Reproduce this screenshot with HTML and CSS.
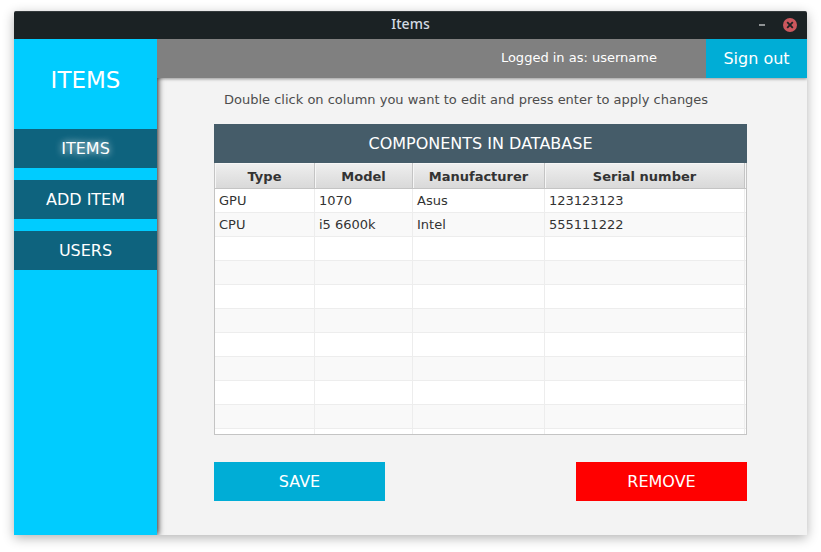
FILE: index.html
```html
<!DOCTYPE html>
<html lang="en">
<head>
<meta charset="utf-8">
<title>Items</title>
<link rel="stylesheet" href="styles.css">
</head>
<body>
<div class="window">
  <header class="titlebar">
    <span class="titlebar-text">Items</span>
    <div class="window-controls">
      <button class="control" type="button" aria-label="Minimize">
        <svg width="14" height="14" viewBox="0 0 14 14"><path d="M4 6h6v2H4z" fill="#8f9394"/></svg>
      </button>
      <button class="control" type="button" aria-label="Close">
        <svg width="14" height="14" viewBox="0 0 14 14"><circle cx="7" cy="7" r="7" fill="#cc575d"/><path d="M4.2 4.2l5.6 5.6M9.8 4.2l-5.6 5.6" stroke="#1b2224" stroke-width="1.8"/></svg>
      </button>
    </div>
  </header>
  <div class="layout">
    <nav class="sidebar">
      <h1 class="sidebar-title">ITEMS</h1>
      <button class="nav-button active" type="button">ITEMS</button>
      <button class="nav-button" type="button">ADD ITEM</button>
      <button class="nav-button" type="button">USERS</button>
    </nav>
    <div class="page">
      <div class="topbar">
        <span class="user">Logged in as: username</span>
        <button class="sign-out" type="button">Sign out</button>
      </div>
      <main class="content">
        <p class="hint">Double click on column you want to edit and press enter to apply changes</p>
        <h2 class="table-title">COMPONENTS IN DATABASE</h2>
        <div class="table-view">
          <table class="items">
            <colgroup><col class="col-type"><col class="col-model"><col class="col-maker"><col><col class="col-rest"></colgroup>
            <thead>
              <tr><th>Type</th><th>Model</th><th>Manufacturer</th><th>Serial number</th><th></th></tr>
            </thead>
            <tbody>
              <tr><td>GPU</td><td>1070</td><td>Asus</td><td>123123123</td><td></td></tr>
              <tr><td>CPU</td><td>i5 6600k</td><td>Intel</td><td>555111222</td><td></td></tr>
              <tr><td></td><td></td><td></td><td></td><td></td></tr>
              <tr><td></td><td></td><td></td><td></td><td></td></tr>
              <tr><td></td><td></td><td></td><td></td><td></td></tr>
              <tr><td></td><td></td><td></td><td></td><td></td></tr>
              <tr><td></td><td></td><td></td><td></td><td></td></tr>
              <tr><td></td><td></td><td></td><td></td><td></td></tr>
              <tr><td></td><td></td><td></td><td></td><td></td></tr>
              <tr><td></td><td></td><td></td><td></td><td></td></tr>
              <tr><td></td><td></td><td></td><td></td><td></td></tr>
            </tbody>
          </table>
        </div>
        <div class="actions">
          <button class="action save" type="button">SAVE</button>
          <button class="action remove" type="button">REMOVE</button>
        </div>
      </main>
    </div>
  </div>
</div>
</body>
</html>
```
FILE: styles.css
```css
* {
  box-sizing: border-box;
}

body {
  margin: 0;
  padding: 11px 14px 17px;
  height: 100vh;
  background: #fff;
  color: #333;
  font: 13px/16px "DejaVu Sans", sans-serif;
}

button {
  border: 0;
  padding: 0;
  color: #fff;
  font: 16px/20px "DejaVu Sans", sans-serif;
}

.window {
  display: flex;
  flex-direction: column;
  height: 100%;
  border-radius: 2px 2px 0 0;
  background: #f3f3f3;
  box-shadow: 0 3px 12px rgba(0, 0, 0, 0.3);
}

.titlebar {
  display: grid;
  grid-template-columns: 1fr auto 1fr;
  align-items: center;
  height: 28px;
  padding: 0 10px 1px;
  border-top: 1px solid #343a3c;
  border-radius: 2px 2px 0 0;
  background: #1b2224;
}

.titlebar-text {
  grid-column: 2;
  padding-bottom: 2px;
  color: #d3dae3;
  font: 500 14px/20px "Noto Sans", sans-serif;
}

.window-controls {
  display: flex;
  justify-content: flex-end;
  gap: 14px;
}

.control {
  display: flex;
  background: none;
}

.layout {
  display: flex;
  flex: 1;
  min-height: 0;
}

.sidebar {
  position: relative;
  z-index: 1;
  display: flex;
  flex-direction: column;
  gap: 12px;
  width: 143px;
  background: #00ccff;
  box-shadow: 1px 0 6px rgba(0, 0, 0, 0.9);
  clip-path: inset(0 -12px 0 0);
}

.sidebar-title {
  margin: 0;
  height: 78px;
  padding-top: 27px;
  color: #fff;
  font-size: 23px;
  font-weight: 400;
  line-height: 28px;
  text-align: center;
}

.nav-button {
  height: 39px;
  background: #0e637e;
}

.active {
  text-shadow: 0 0 7px #fff;
}

.page {
  display: flex;
  flex: 1;
  flex-direction: column;
  min-width: 0;
}

.topbar {
  position: relative;
  z-index: 2;
  display: flex;
  align-items: center;
  justify-content: flex-end;
  gap: 49px;
  background: #808080;
  box-shadow: 0 1px 3px rgba(0, 0, 0, 0.4);
  clip-path: inset(0 0 -6px 0);
}

.user {
  padding-bottom: 2px;
  color: #fff;
}

.sign-out {
  width: 101px;
  height: 39px;
  background: #00add6;
}

.content {
  display: flex;
  flex: 1;
  flex-direction: column;
  min-height: 0;
  padding: 14px 60px 34px 57px;
}

.hint {
  margin: 0 0 16px;
  padding-left: 10px;
  color: #4d4d4d;
}

.table-title {
  margin: 0;
  padding: 10px 0 9px;
  background: #455c69;
  color: #fff;
  font-size: 16px;
  font-weight: 400;
  line-height: 20px;
  text-align: center;
}

.table-view {
  flex: 1;
  min-height: 0;
  overflow: hidden;
  border: 1px solid #c4c4c4;
  border-top: 0;
  background: #fff;
}

.items {
  width: 100%;
  border-collapse: separate;
  border-spacing: 0;
  table-layout: fixed;
}

.col-type {
  width: 100px;
}

.col-model {
  width: 98px;
}

.col-maker {
  width: 132px;
}

.col-rest {
  width: 1px;
}

.items th {
  height: 26px;
  padding: 2px 0 0;
  border-right: 1px solid #c4c4c4;
  border-bottom: 1px solid #c4c4c4;
  background: linear-gradient(#efefef, #d9d9d9);
  box-shadow: inset 1px 1px #f6f6f6;
}

.items td {
  height: 24px;
  padding: 0 4px;
  border-right: 1px solid #ededed;
  border-bottom: 1px solid #ededed;
}

.items th:last-child,
.items td:last-child {
  padding: 0;
  border-right: 0;
}

.items tbody tr:nth-child(even) {
  background: #f9f9f9;
}

.actions {
  display: flex;
  justify-content: space-between;
  margin-top: 27px;
}

.action {
  width: 171px;
  height: 39px;
}

.save {
  background: #00add6;
}

.remove {
  background: #ff0000;
}
```
